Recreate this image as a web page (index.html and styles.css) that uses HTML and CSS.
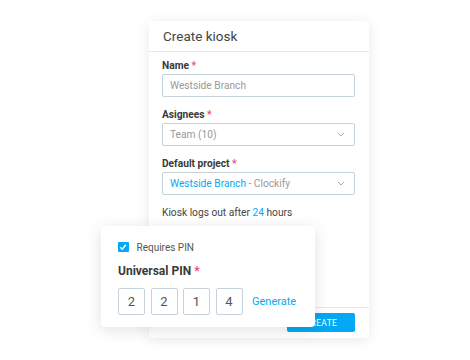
FILE: index.html
```html
<!DOCTYPE html>
<html>
<head>
<meta charset="utf-8">
<link rel="stylesheet" href="styles.css">
</head>
<body>
<div class="stage">
  <div class="card">
    <div class="card-header">Create kiosk</div>
    <div class="card-body">
      <div class="field">
        <div class="label">Name <span class="req">*</span></div>
        <div class="input">Westside Branch</div>
      </div>
      <div class="field">
        <div class="label">Asignees <span class="req">*</span></div>
        <div class="input select"><span>Team (10)</span>
          <svg class="chev" width="8" height="5" viewBox="0 0 8 5"><path d="M1 1 L4 4 L7 1" fill="none" stroke="#9aa5ad" stroke-width="0.9"/></svg>
        </div>
      </div>
      <div class="field">
        <div class="label">Default project <span class="req">*</span></div>
        <div class="input select"><span><span class="blue">Westside Branch</span> - Clockify</span>
          <svg class="chev" width="8" height="5" viewBox="0 0 8 5"><path d="M1 1 L4 4 L7 1" fill="none" stroke="#9aa5ad" stroke-width="0.9"/></svg>
        </div>
      </div>
      <div class="note">Kiosk logs out after <span class="blue">24</span> hours</div>
    </div>
    <div class="card-footer">
      <button class="btn">CREATE</button>
    </div>
  </div>

  <div class="popup">
    <div class="check-row">
      <span class="checkbox"><svg width="10" height="10" viewBox="0 0 10 10"><path d="M2.2 5.2 L4.2 7.2 L7.9 2.8" fill="none" stroke="#fff" stroke-width="1.5"/></svg></span>
      <span class="check-label">Requires PIN</span>
    </div>
    <div class="pin-title">Universal PIN <span class="req">*</span></div>
    <div class="pin-row">
      <div class="pin">2</div>
      <div class="pin">2</div>
      <div class="pin">1</div>
      <div class="pin">4</div>
      <span class="generate">Generate</span>
    </div>
  </div>
</div>
</body>
</html>
```
FILE: styles.css
```css
* { box-sizing: border-box; }
html, body { margin: 0; padding: 0; background: #fff; }
body { font-family: Roboto, "Liberation Sans", sans-serif; color: #444; }
.stage { position: relative; width: 470px; height: 360px; padding: 21px 0 0 149px; }
.card {
  width: 220px; height: 317px; background: #fff; border-radius: 3px;
  box-shadow: 0 2px 14px rgba(0,0,0,0.09);
  display: flex; flex-direction: column;
}
.card-header {
  height: 31px; line-height: 30px; padding: 0 14px; font-size: 13.5px; color: #444;
  border-bottom: 1px solid #e4eaee;
}
.card-body { padding: 7px 14px 0 13px; }
.field { margin-bottom: 11px; }
.label { font-size: 10.2px; font-weight: 700; line-height: 14px; margin-bottom: 1px; color: #3a3a3a; }
.req { color: #f0487d; }
.input {
  height: 23px; border: 1px solid #c6d2d9; border-radius: 2px; font-size: 10.2px; color: #999;
  padding: 0 7px; display: flex; align-items: center; justify-content: space-between;
}
.blue { color: #03a9f4; }
.chev { margin-right: 2px; }
.note { font-size: 10.2px; line-height: 14px; margin-top: 4px; color: #444; }
.card-footer {
  margin-top: auto; border-top: 1px solid #e4eaee; padding: 5px 14px 6px 0;
  display: flex; justify-content: flex-end;
}
.btn {
  width: 68px; height: 19px; border: none; border-radius: 2px; background: #03a9f4; color: #fff;
  font-family: Roboto, "Liberation Sans", sans-serif; font-size: 8.5px; letter-spacing: 0.3px; padding: 0;
}
.popup {
  position: absolute; left: 101px; top: 226px; width: 214px; height: 101px;
  background: #fff; border-radius: 4px; box-shadow: 0 3px 16px rgba(0,0,0,0.12);
  padding: 15px 0 0 17px;
}
.check-row { display: flex; align-items: center; height: 12px; }
.checkbox {
  width: 10.5px; height: 10.5px; background: #03a9f4; border-radius: 1px; display: flex;
  align-items: center; justify-content: center; margin-right: 8px;
}
.check-label { font-size: 10px; color: #555; }
.pin-title { font-size: 12px; font-weight: 700; margin-top: 10px; line-height: 16px; color: #3a3a3a; }
.pin-row { display: flex; align-items: center; margin-top: 9px; gap: 5.5px; }
.pin {
  width: 27px; height: 27px; border: 1px solid #c6d2d9; border-radius: 2px; font-size: 13px;
  color: #555; display: flex; align-items: center; justify-content: center;
}
.generate { font-size: 11px; color: #03a9f4; margin-left: 4px; }
```
